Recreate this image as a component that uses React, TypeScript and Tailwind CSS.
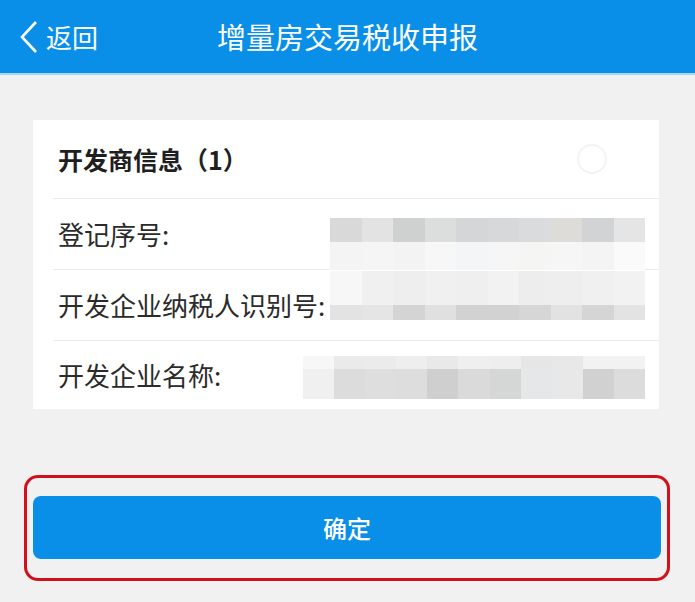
import React from 'react';

const FONT = { fontFamily: '"Noto Sans CJK SC", "Noto Sans", sans-serif' };

// mosaic colours of the blurred values, one class per block
const row1Dark = ['bg-[#d9d9d9]', 'bg-[#e3e3e3]', 'bg-[#cfd0d0]', 'bg-[#dcdddd]', 'bg-[#d4d6d7]', 'bg-[#d6d8d9]', 'bg-[#d9dbdc]', 'bg-[#dddcd8]', 'bg-[#d1d3d5]', 'bg-[#e5e5e5]'];
const row1Light = ['bg-[#f5f4f4]', 'bg-[#f6f5f5]', 'bg-[#f4f3f3]', 'bg-[#f7f7f7]', 'bg-[#f4f5f6]', 'bg-[#f6f6f6]', 'bg-[#f5f5f4]', 'bg-[#f6f6f6]', 'bg-[#f4f4f4]', 'bg-[#fafafa]'];
const row2Light = ['bg-[#f7f7f7]', 'bg-[#f0f0f0]', 'bg-[#eeeeee]', 'bg-[#f0f0f0]', 'bg-[#efefef]', 'bg-[#f2f2f2]', 'bg-[#ededed]', 'bg-[#eeeeee]', 'bg-[#f0f0f0]', 'bg-[#f2f2f2]'];
const row2Dark = ['bg-[#e3e3e3]', 'bg-[#e5e5e5]', 'bg-[#d4d4d4]', 'bg-[#e0e0e0]', 'bg-[#d2d2d2]', 'bg-[#d2d2d2]', 'bg-[#d6d6d6]', 'bg-[#e2e2e2]', 'bg-[#d5d5d5]', 'bg-[#e3e3e3]'];
const row3Light = ['bg-[#f7f7f7]', 'bg-[#eaeaea]', 'bg-[#ebebeb]', 'bg-[#eeeeee]', 'bg-[#e9e9e9]', 'bg-[#efefef]', 'bg-[#eeeeee]', 'bg-[#e6e6e6]', 'bg-[#e8e8e8]', 'bg-[#f2f2f2]', 'bg-[#f2f2f2]'];
const row3Dark = ['bg-[#f0f0f0]', 'bg-[#dcdcdc]', 'bg-[#dedede]', 'bg-[#dddddd]', 'bg-[#cfcfcf]', 'bg-[#dadada]', 'bg-[#d5d7d7]', 'bg-[#e6e7e8]', 'bg-[#e9e8e8]', 'bg-[#d1d1d1]', 'bg-[#dcdcdc]'];

function Band({ cells, h }: { cells: string[]; h: string }) {
  return (
    <div className={`flex ${h}`}>
      {cells.map((c, i) => (
        <div key={i} className={`flex-1 ${c}`} />
      ))}
    </div>
  );
}

function InfoRow({ label, children, last }: { label: string; children: React.ReactNode; last?: boolean }) {
  return (
    <div className={`ml-[20px] flex ${last ? 'h-[68px]' : 'h-[71px] border-b border-[#ebebeb]'}`}>
      <span className="self-center pl-[5px] text-[26px] leading-none text-[#2b2b2b]">{label}</span>
      <div className="ml-auto mr-[14px] blur-[0.6px]">{children}</div>
    </div>
  );
}

export default function App() {
  return (
    <div className="w-[695px] h-[602px] bg-[#f1f1f1] overflow-hidden" style={FONT}>
      <header className="h-[75px] bg-[#0a8fe8] border-b-2 border-[#a3d8f8] flex items-center relative">
        <div className="flex items-center pl-[18px] text-white">
          <svg width="20" height="34" viewBox="0 0 20 34" fill="none">
            <polyline points="18,2 4,17 18,32" stroke="white" strokeWidth="2.6" strokeLinejoin="miter" />
          </svg>
          <span className="ml-[8px] text-[26px] leading-none">返回</span>
        </div>
        <h1 className="absolute left-0 right-0 text-center text-white text-[29px] leading-none pointer-events-none">
          增量房交易税收申报
        </h1>
      </header>

      <div className="mt-[45px] ml-[33px] w-[626px] bg-white">
        <div className="h-[79px] ml-[20px] border-b border-[#ebebeb] flex items-center">
          <span className="pl-[5px] text-[25px] font-bold leading-none text-[#1f1f1f]">开发商信息（1）</span>
          <span className="ml-auto mr-[52px] w-[30px] h-[30px] rounded-full border-2 border-[#f3f3f3]" />
        </div>

        <InfoRow label="登记序号:">
          <div className="w-[315px] mt-[19px]">
            <Band cells={row1Dark} h="h-[24px]" />
            <Band cells={row1Light} h="h-[28px]" />
          </div>
        </InfoRow>

        <InfoRow label="开发企业纳税人识别号:">
          <div className="w-[315px] mt-[1px]">
            <Band cells={row2Light} h="h-[34px]" />
            <Band cells={row2Dark} h="h-[15px]" />
          </div>
        </InfoRow>

        <InfoRow label="开发企业名称:" last>
          <div className="w-[342px] mt-[15px]">
            <Band cells={row3Light} h="h-[13px]" />
            <Band cells={row3Dark} h="h-[30px]" />
          </div>
        </InfoRow>
      </div>

      <div className="mt-[66px] ml-[24px] w-[646px] h-[106px] rounded-[14px] border-[3px] border-[#d0111b] px-[6px] pt-[18px]">
        <button className="w-full h-[63px] rounded-[8px] bg-[#0a8fe8] text-white text-[24px] font-medium leading-none">
          确定
        </button>
      </div>
    </div>
  );
}
